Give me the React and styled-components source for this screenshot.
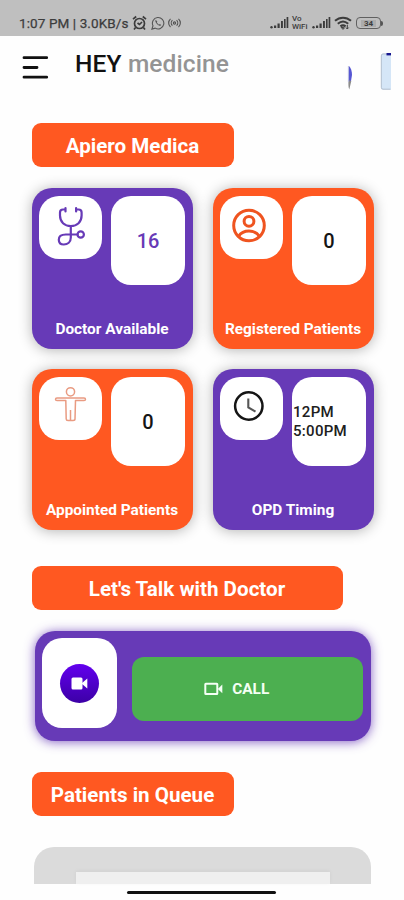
import React from "react";
import styled, { createGlobalStyle } from "styled-components";

const PURPLE = "#673ab7";
const ORANGE = "#ff5821";

const GlobalStyle = createGlobalStyle`
  * { box-sizing: border-box; }
  body { margin: 0; background: #fefefe; font-family: Roboto, sans-serif; }
  svg { display: block; flex: none; }
`;

const Screen = styled.div`
  width: 404px;
  height: 900px;
  overflow: hidden;
  display: flex;
  flex-direction: column;
  background: #fefefe;
`;

const StatusBar = styled.header`
  height: 35.5px;
  flex: none;
  display: flex;
  justify-content: space-between;
  padding: 13px 21px 0 19px;
  background: #bfbfbf;
  color: #3c3c3c;
`;

const StatusGroup = styled.div`
  display: flex;
  align-items: center;
  height: 20px;
  gap: ${(p) => p.$gap}px;
`;

const Clock = styled.span`
  font-size: 13.5px;
  line-height: 22px;
  letter-spacing: 0.1px;
  white-space: pre;
  -webkit-text-stroke: 0.25px #3c3c3c;
`;

const Carrier = styled.span`
  width: 17px;
  font-size: 8px;
  line-height: 7.5px;
  font-weight: 500;
  margin-bottom: 1px;
`;

const TopBar = styled.nav`
  height: 87.5px;
  flex: none;
  display: flex;
  align-items: flex-start;
  padding: 14px 13px 0 22px;
`;

const MenuButton = styled.button`
  width: 27px;
  padding: 6px 0 0;
  border: 0;
  background: none;
`;

const Brand = styled.h1`
  margin: 0 0 0 26px;
  flex: 1;
  font-size: 24.5px;
  line-height: 28px;
  font-weight: 500;
  letter-spacing: 0.15px;
  color: #111;
  span { color: #949494; letter-spacing: 0.1px; }
`;

const Tag = styled.h2`
  width: ${(p) => p.$width}px;
  height: 44px;
  flex: none;
  margin: 0 0 0 31.5px;
  border-radius: 9px;
  background: ${ORANGE};
  color: #fff;
  font-size: 20.6px;
  line-height: 46px;
  font-weight: 700;
  text-align: center;
`;

const Grid = styled.section`
  display: grid;
  grid-template-columns: 161.5px 161.5px;
  grid-auto-rows: 160.5px;
  gap: 20.5px 19.5px;
  margin: 21px 0 36.5px 31.5px;
`;

const Card = styled.article`
  display: flex;
  flex-direction: column;
  justify-content: space-between;
  padding: 7.5px 8px 10.5px 7.5px;
  border-radius: 20px;
  background: ${(p) => p.$color};
  box-shadow: 0 1px 14px rgba(0, 0, 0, 0.3);
`;

const CardTop = styled.div`
  display: flex;
  align-items: flex-start;
  justify-content: space-between;
`;

const IconTile = styled.div`
  width: 63px;
  height: 63.5px;
  display: flex;
  justify-content: center;
  border-radius: 20px;
  background: #fff;
`;

const ValueTile = styled.div`
  width: 74px;
  height: 89.5px;
  display: flex;
  align-items: center;
  justify-content: ${(p) => (p.$small ? "flex-start" : "center")};
  padding: ${(p) => (p.$small ? "1px 0 0 1px" : "2px 0 0")};
  border-radius: 20px;
  background: #fff;
  color: ${(p) => p.$color};
  font-size: ${(p) => (p.$small ? 15 : 20)}px;
  line-height: ${(p) => (p.$small ? 18.5 : 24)}px;
  letter-spacing: ${(p) => (p.$small ? 0.3 : 0)}px;
  font-weight: 500;
  white-space: pre;
`;

const CardLabel = styled.div`
  color: #fff;
  font-size: 15.4px;
  line-height: 18px;
  font-weight: 700;
  text-align: center;
  white-space: nowrap;
`;

const CallCard = styled.section`
  width: 336.5px;
  height: 109.5px;
  flex: none;
  display: flex;
  gap: 15px;
  margin: 21px 0 31.5px 34.5px;
  padding: 7px 8px 0 7.5px;
  border-radius: 20px;
  background: ${PURPLE};
  box-shadow: 0 1px 11px rgba(103, 58, 183, 0.8);
`;

const VideoTile = styled.div`
  width: 74.5px;
  height: 90px;
  display: grid;
  place-items: center;
  border-radius: 20px;
  background: #fff;
`;

const VideoBadge = styled.div`
  width: 39px;
  height: 39px;
  display: grid;
  place-items: center;
  border-radius: 50%;
  background: linear-gradient(#6200ee, #3c00a6);
`;

const CallButton = styled.button`
  flex: 1;
  height: 64.5px;
  margin-top: 18.5px;
  display: flex;
  align-items: center;
  justify-content: center;
  gap: 9px;
  padding: 0 21px 0 0;
  border: 0;
  border-radius: 12px;
  background: #4caf50;
  color: #f4fff4;
  font: 700 15.4px/18px Roboto, sans-serif;
`;

const QueuePanel = styled.section`
  width: 337px;
  height: 37px;
  flex: none;
  margin: 31px 0 0 34px;
  padding: 25px 41px 0 42px;
  border-radius: 20px 20px 0 0;
  background: #dbdbdb;
`;

const QueueList = styled.div`
  height: 12px;
  background: #efefef;
  box-shadow: 0 -1px 4px rgba(0, 0, 0, 0.05);
`;

const HomeBar = styled.div`
  width: 149px;
  height: 3.5px;
  flex: none;
  margin: 6.5px 0 0 127px;
  border-radius: 2px;
  background: #111;
`;

const Alarm = () => (
  <svg width="15" height="16" viewBox="0 0 15 16" fill="none" stroke="#3c3c3c" strokeWidth="1.7">
    <circle cx="7.5" cy="8.5" r="5" />
    <path d="M1 4.2 4.2 1.5M14 4.2 10.8 1.5M3.6 12.5 2 14.5M11.4 12.5l1.6 2M5.5 8l2 1.5L10 7" />
  </svg>
);

const WhatsApp = () => (
  <svg width="14" height="14" viewBox="0 0 14 14" fill="none" stroke="#555" strokeWidth="1.1">
    <path d="M.9 13.1 2 9.7a5.7 5.7 0 1 1 2.2 2.4Z" />
    <path d="M4.7 3.8c-1 1.4.2 3.3 1.7 4.6 1.6 1.4 3.2 1.9 3.9.7l-1.5-1.1-.9.7-2.1-2.2.5-.9Z" fill="#555" stroke="none" />
  </svg>
);

const Broadcast = () => (
  <svg width="13" height="10" viewBox="0 0 13 10" fill="none" stroke="#505050" strokeWidth="1.1">
    <path d="M2.5.8C0 3 .1 7 2.5 9M10.5.8c2.5 2.2 2.4 6.2 0 8.2M4.4 2.2c-1.5 1.5-1.5 4 0 5.5M8.6 2.2c1.5 1.5 1.5 4 0 5.5" />
    <circle cx="6.5" cy="5" r="1.1" />
  </svg>
);

const Signal = () => (
  <svg width="19" height="12" viewBox="0 0 19 12" fill="#3c3c3c">
    <circle cx="1.5" cy="10.3" r="1.2" />
    <path d="M4 8.5h2.2V11H4zM7.5 6.5h2.2V11H7.5zM11 4h1.9v7H11zM14 2h1.6v9H14zM16.6 0h1.7v11h-1.7z" />
  </svg>
);

const Wifi = () => (
  <svg width="18" height="14" viewBox="0 0 18 14" fill="none" stroke="#3c3c3c" strokeWidth="2">
    <path d="M1 4.8c4.8-4.2 11.2-4.2 16 0M3.8 7.8c3.2-2.8 7.2-2.8 10.4 0M6.4 10.4c1.6-1.3 3.6-1.3 5.2 0" />
    <path d="m7.2 11.4 1.8 2 1.4-1.6ZM13.3 9v4M12 11.6l1.3 1.4 1.3-1.4" strokeWidth="1" />
  </svg>
);

const BatteryWrap = styled.span`
  display: flex;
  align-items: center;
  margin-left: 1px;
`;

const BatteryBody = styled.span`
  width: 25px;
  height: 12px;
  padding: 1.5px 4px;
  border: 1.2px solid #606060;
  border-radius: 4px;
  background: #acacac content-box;
  color: #3c3c3c;
  font-size: 8px;
  line-height: 7.5px;
  font-weight: 700;
  text-align: center;
`;

const BatteryTip = styled.span`
  width: 2px;
  height: 5px;
  background: #555;
  border-radius: 0 2px 2px 0;
`;

const MenuIcon = () => (
  <svg width="27" height="25" viewBox="0 0 27 25" stroke="#111" strokeWidth="2.8" strokeLinecap="round">
    <path d="M2 1.7h22.7M2 11.5h13M2 21.2h22.7" />
  </svg>
);

const HeaderArt = () => (
  <svg width="44" height="42" viewBox="0 0 44 42">
    <path d="M2 16c2 2 3 5 3 9l-1 6H1.5Z" fill="#5656d3" />
    <path d="m1.5 30 2.8 1-2 8.5c-1-2-1-5.5-.8-9.5Z" fill="#8b8b8b" />
    <path d="M1.4 16v16" stroke="#b8bbdf" />
    <path d="M44 3.700H36q-2 0-2 2v32q0 2 2 2h8Z" fill="#d5e6f7" />
    <path d="M43.500 3.900H36q-1.700 0-1.700 2v31.500q0 1.800 1.700 1.800h7.500" fill="none" stroke="#a9b5c4" strokeWidth=".8" />
    <path d="M39.500 3h4.500v2.400h-4.500z" fill="#17178f" />
  </svg>
);

const Stethoscope = () => (
  <svg width="64" height="64" viewBox="0 0 64 64" fill="none" stroke={PURPLE} strokeWidth="2.2" strokeLinecap="round" strokeLinejoin="round">
    <path d="M26.500 13.500h-2.500q-3 0-3 3v3c0 6.500 4.500 10.500 10.800 10.500s10.800-4 10.800-10.500v-3q0-3-3-3h-2.500M26.500 12v3.500M37.100 12v3.500" />
    <path d="M31.800 30v11.500c0 4.700-3.200 7-7 7-3.200 0-5-2-5-4.800 0-3.400 2.800-5.200 7-5.200h11.700" />
    <circle cx="41.700" cy="38.500" r="3.200" />
  </svg>
);

const Person = () => (
  <svg width="64" height="64" viewBox="0 0 64 64" fill="none" stroke="#ef5420" strokeWidth="3">
    <circle cx="29" cy="29.5" r="15.3" />
    <circle cx="29" cy="25.3" r="4.9" />
    <path d="M18.500 40.300c2.500-3.600 6.300-5.200 10.500-5.200s8 1.600 10.500 5.200" />
  </svg>
);

const Body = () => (
  <svg width="64" height="64" viewBox="0 0 64 64" fill="none" stroke="#e99b82" strokeWidth="1.5" strokeLinejoin="round">
    <circle cx="31.5" cy="14.8" r="4.1" />
    <path d="M18 21h27q1.500 0 1.500 1.300t-1.500 1.300h-8.500L36 42q0 1.500-2 1.500h-5q-1.800 0-1.800-1.500l-.4-18.400H18q-1.500 0-1.500-1.300T18 21ZM31.500 43V33" />
  </svg>
);

const ClockIcon = () => (
  <svg width="64" height="64" viewBox="0 0 64 64" fill="none" stroke="#151515" strokeWidth="2.5">
    <circle cx="28.8" cy="29" r="13.7" />
    <path d="M28.300 21.500v9l7.200 4.200" stroke="#555" strokeWidth="2.1" />
  </svg>
);

const VideoIcon = () => (
  <svg width="17" height="13" viewBox="0 0 17 13" fill="#fff">
    <rect x=".5" y=".5" width="11" height="12" rx="1.5" />
    <path d="m10.500 6.500 5.800-5v10Z" />
  </svg>
);

const CallIcon = () => (
  <svg width="19" height="14" viewBox="0 0 19 14" fill="none" stroke="#f4fff4" strokeWidth="2" strokeLinejoin="round">
    <rect x="1.3" y="1.8" width="12" height="10.2" rx=".5" />
    <path d="m13.800 6.900 4.500-4.300v8.600Z" fill="#f4fff4" stroke="none" />
  </svg>
);

const cards = [
  { label: "Doctor Available", value: "16", color: PURPLE, text: PURPLE, Icon: Stethoscope },
  { label: "Registered Patients", value: "0", color: ORANGE, text: "#151515", Icon: Person },
  { label: "Appointed Patients", value: "0", color: ORANGE, text: "#151515", Icon: Body },
  { label: "OPD Timing", value: "12PM\n5:00PM", color: PURPLE, text: "#202020", Icon: ClockIcon, small: true },
];

export default function App() {
  return (
    <Screen>
      <GlobalStyle />
      <StatusBar>
        <StatusGroup $gap={3.5}>
          <Clock>1:07 PM | 3.0KB/s</Clock>
          <Alarm />
          <WhatsApp />
          <Broadcast />
        </StatusGroup>
        <StatusGroup $gap={3}>
          <Signal />
          <Carrier>Vo WiFi</Carrier>
          <Signal />
          <Wifi />
          <BatteryWrap>
            <BatteryBody>34</BatteryBody>
            <BatteryTip />
          </BatteryWrap>
        </StatusGroup>
      </StatusBar>
      <TopBar>
        <MenuButton aria-label="Menu"><MenuIcon /></MenuButton>
        <Brand>HEY <span>medicine</span></Brand>
        <HeaderArt />
      </TopBar>
      <Tag $width={202}>Apiero Medica</Tag>
      <Grid>
        {cards.map(({ label, value, color, text, Icon, small }) => (
          <Card key={label} $color={color}>
            <CardTop>
              <IconTile><Icon /></IconTile>
              <ValueTile $color={text} $small={small}>{value}</ValueTile>
            </CardTop>
            <CardLabel>{label}</CardLabel>
          </Card>
        ))}
      </Grid>
      <Tag $width={311}>Let's Talk with Doctor</Tag>
      <CallCard>
        <VideoTile><VideoBadge><VideoIcon /></VideoBadge></VideoTile>
        <CallButton><CallIcon />CALL</CallButton>
      </CallCard>
      <Tag $width={202}>Patients in Queue</Tag>
      <QueuePanel><QueueList /></QueuePanel>
      <HomeBar />
    </Screen>
  );
}
